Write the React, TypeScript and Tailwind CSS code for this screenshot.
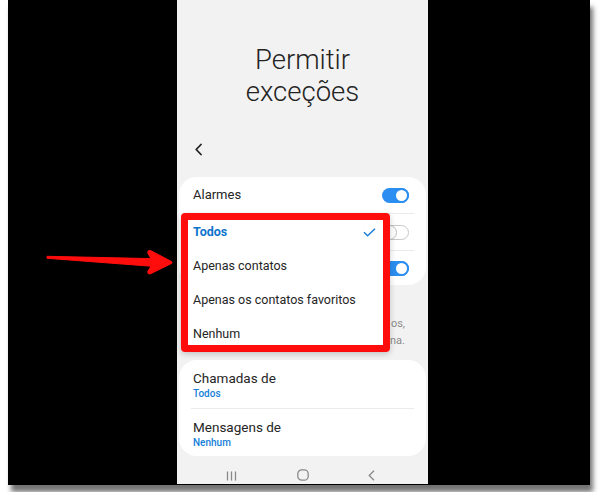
import React from "react";

const font = { fontFamily: "Roboto, 'Noto Sans', Arial, sans-serif" };

function Toggle({ on }: { on: boolean }) {
  if (on) {
    return (
      <div className="relative h-[15px] w-[27px] rounded-full bg-[#2b8ef0]">
        <div className="absolute right-0 top-0 h-[15px] w-[15px] rounded-full border-[2px] border-[#2b8ef0] bg-white" />
      </div>
    );
  }
  return (
    <div className="relative h-[15px] w-[27px] rounded-full border border-[#c8c8c8] bg-white">
      <div className="absolute left-[-1px] top-[-1px] h-[15px] w-[15px] rounded-full border-[1.5px] border-[#bdbdbd] bg-white" />
    </div>
  );
}

function Row({ label, on, h }: { label: string; on: boolean; h: string }) {
  return (
    <div className={`flex items-center justify-between pl-[14px] pr-[17px] ${h}`}>
      <span className="text-[13px] text-[#252525]">{label}</span>
      <Toggle on={on} />
    </div>
  );
}

export default function App() {
  return (
    <div className="relative h-[492px] w-[600px] overflow-hidden bg-white" style={font}>
      <div className="ml-[8px] flex h-[485px] w-[582px] bg-black pl-[169px] shadow-[3px_7px_5px_rgba(0,0,0,0.55)]">
        <div className="relative flex h-[484px] w-[251px] flex-col bg-[#f2f2f2]">
          {/* title */}
          <div className="pt-[44px] text-center text-[27.5px] font-light leading-[32px] text-[#232323]">
            <div>Permitir</div>
            <div>exceções</div>
          </div>
          {/* back */}
          <div className="mt-[35px] pl-[17px]">
            <svg width="9" height="13" viewBox="0 0 9 13">
              <path d="M7 1.5 L2.2 6.5 L7 11.5" fill="none" stroke="#222" strokeWidth="1.8" strokeLinecap="round" strokeLinejoin="round" />
            </svg>
          </div>
          {/* card 1 */}
          <div className="mx-[2px] mt-[21px] flex flex-col rounded-[18px] bg-white">
            <Row label="Alarmes" on={true} h="h-[36px]" />
            <div className="mx-[12px] h-px bg-[#ebebeb]" />
            <Row label="" on={false} h="h-[36px]" />
            <div className="mx-[12px] h-px bg-[#ebebeb]" />
            <Row label="" on={true} h="h-[34px]" />
          </div>
          {/* description */}
          <div className="mt-[30px] flex flex-col pr-[23px] text-[11px] leading-[17px] text-[#8a8a8a]">
            <div className="flex justify-end whitespace-nowrap">os,</div>
            <div className="flex justify-end whitespace-nowrap">na.</div>
          </div>
          {/* card 2 */}
          <div className="mx-[2px] mt-[11px] flex flex-col rounded-[18px] bg-white">
            <div className="flex h-[48px] flex-col justify-center pl-[14px] pt-[2px]">
              <span className="text-[13.5px] leading-[17px] text-[#252525]">Chamadas de</span>
              <span className="text-[10px] font-medium leading-[13px] text-[#1580d8]">Todos</span>
            </div>
            <div className="mx-[12px] h-px bg-[#ebebeb]" />
            <div className="flex h-[47px] flex-col justify-center pl-[14px] pt-[2px]">
              <span className="text-[13.5px] leading-[17px] text-[#252525]">Mensagens de</span>
              <span className="text-[10px] font-medium leading-[13px] text-[#1580d8]">Nenhum</span>
            </div>
          </div>
          {/* nav bar */}
          <div className="flex flex-1 items-end justify-between pb-[3px] pl-[49px] pr-[53px]">
            <svg width="11" height="10" viewBox="0 0 11 10">
              <path d="M1.5 0.5V9.5M5.5 0.5V9.5M9.5 0.5V9.5" stroke="#8a8a8a" strokeWidth="1.3" />
            </svg>
            <svg width="12" height="12" viewBox="0 0 12 12">
              <rect x="0.8" y="0.8" width="10.4" height="10.4" rx="4" fill="none" stroke="#8a8a8a" strokeWidth="1.3" />
            </svg>
            <svg width="7" height="11" viewBox="0 0 7 11">
              <path d="M6 0.8 L1.2 5.5 L6 10.2" fill="none" stroke="#8a8a8a" strokeWidth="1.3" />
            </svg>
          </div>

          {/* dropdown menu */}
          <div className="absolute left-[4px] top-[213px] h-[139px] w-[209px] rounded-[4px] bg-white shadow-[0_2px_6px_rgba(0,0,0,0.2)]">
            <div className="flex flex-col pl-[12px] pr-[14px] pt-[2px] text-[12.5px] text-[#252525]">
              <div className="flex h-[34px] items-center justify-between">
                <span className="font-bold text-[#0d74cc]">Todos</span>
                <svg width="13" height="9" viewBox="0 0 13 9">
                  <path d="M1 4.2 L4.6 7.8 L12 0.8" fill="none" stroke="#1a7ed6" strokeWidth="1.5" />
                </svg>
              </div>
              <div className="flex h-[34px] items-center">Apenas contatos</div>
              <div className="flex h-[34px] items-center">Apenas os contatos favoritos</div>
              <div className="flex h-[34px] items-center">Nenhum</div>
            </div>
          </div>
          {/* red highlight */}
          <div className="absolute left-[4px] top-[213px] h-[139px] w-[209px] rounded-[4px] border-[7px] border-[#ff0d0d]" />
        </div>
      </div>

      {/* red arrow */}
      <svg className="absolute left-[40px] top-[240px]" width="140" height="40" viewBox="40 240 140 40">
        <path
          d="M47 256.3 L151 258.6 L148 253.5 Q147 250 150.5 250.5 L171.5 261.5 Q172.5 262.5 171.5 263.5 L150.5 273.8 Q147 274.5 148 271 L151 266.2 L47 258.3 Z"
          fill="#ff0d0d"
          stroke="#ff0d0d"
          strokeWidth="1"
          strokeLinejoin="round"
        />
      </svg>
    </div>
  );
}
